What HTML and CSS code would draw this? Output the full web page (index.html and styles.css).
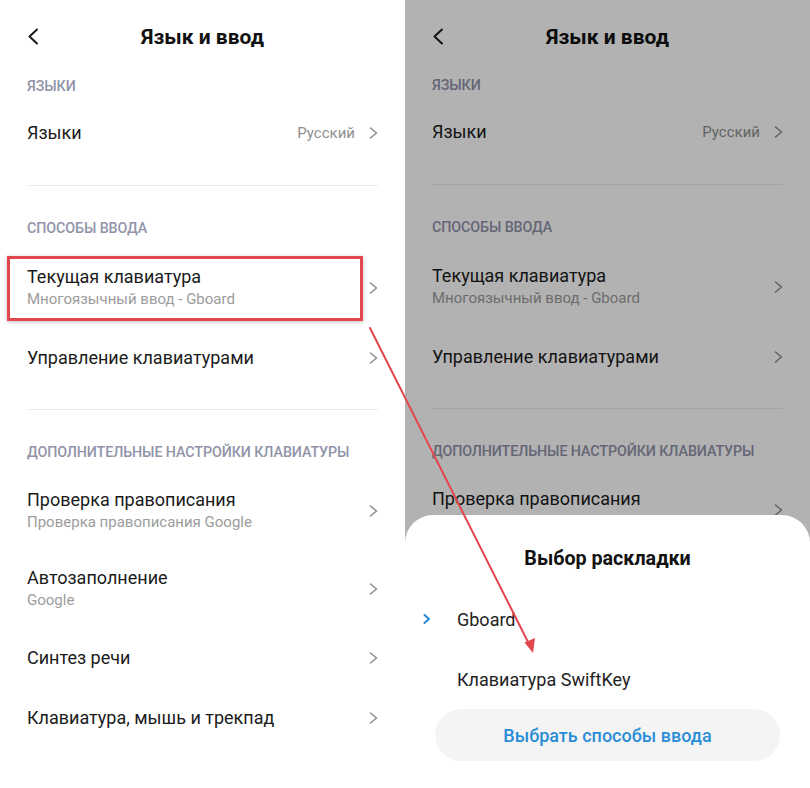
FILE: index.html
```html
<!DOCTYPE html>
<html lang="ru">
<head>
<meta charset="utf-8">
<title>Язык и ввод</title>
<link rel="stylesheet" href="styles.css">
</head>
<body>
<div class="page">
  <section class="screen">
    <header class="topbar">
      <svg class="back" viewBox="0 0 12 17" width="12" height="17"><path d="M10 1.5 L2.5 8.5 L10 15.5"/></svg>
      <h1 class="title">Язык и ввод</h1>
    </header>
    <div class="sec">ЯЗЫКИ</div>
    <div class="row row--compact"><span class="label">Языки</span><span class="value">Русский</span><svg class="chev" viewBox="0 0 9 12"><path d="M1.5 1 L7.5 6 L1.5 11"/></svg></div>
    <div class="divider"></div>
    <div class="sec">СПОСОБЫ ВВОДА</div>
    <div class="row row--two row--tall"><div class="text"><span class="label">Текущая клавиатура</span><span class="sub">Многоязычный ввод - Gboard</span></div><svg class="chev" viewBox="0 0 9 12"><path d="M1.5 1 L7.5 6 L1.5 11"/></svg></div>
    <div class="row"><span class="label">Управление клавиатурами</span><svg class="chev" viewBox="0 0 9 12"><path d="M1.5 1 L7.5 6 L1.5 11"/></svg></div>
    <div class="divider"></div>
    <div class="sec">ДОПОЛНИТЕЛЬНЫЕ НАСТРОЙКИ КЛАВИАТУРЫ</div>
    <div class="row row--two"><div class="text"><span class="label">Проверка правописания</span><span class="sub">Проверка правописания Google</span></div><svg class="chev" viewBox="0 0 9 12"><path d="M1.5 1 L7.5 6 L1.5 11"/></svg></div>
    <div class="row row--two"><div class="text"><span class="label">Автозаполнение</span><span class="sub">Google</span></div><svg class="chev" viewBox="0 0 9 12"><path d="M1.5 1 L7.5 6 L1.5 11"/></svg></div>
    <div class="row"><span class="label">Синтез речи</span><svg class="chev" viewBox="0 0 9 12"><path d="M1.5 1 L7.5 6 L1.5 11"/></svg></div>
    <div class="row"><span class="label">Клавиатура, мышь и трекпад</span><svg class="chev" viewBox="0 0 9 12"><path d="M1.5 1 L7.5 6 L1.5 11"/></svg></div>
    <div class="highlight"></div>
  </section>

  <section class="screen screen--dim">
    <header class="topbar">
      <svg class="back" viewBox="0 0 12 17" width="12" height="17"><path d="M10 1.5 L2.5 8.5 L10 15.5"/></svg>
      <h1 class="title">Язык и ввод</h1>
    </header>
    <div class="sec">ЯЗЫКИ</div>
    <div class="row row--compact"><span class="label">Языки</span><span class="value">Русский</span><svg class="chev" viewBox="0 0 9 12"><path d="M1.5 1 L7.5 6 L1.5 11"/></svg></div>
    <div class="divider"></div>
    <div class="sec">СПОСОБЫ ВВОДА</div>
    <div class="row row--two row--tall"><div class="text"><span class="label">Текущая клавиатура</span><span class="sub">Многоязычный ввод - Gboard</span></div><svg class="chev" viewBox="0 0 9 12"><path d="M1.5 1 L7.5 6 L1.5 11"/></svg></div>
    <div class="row"><span class="label">Управление клавиатурами</span><svg class="chev" viewBox="0 0 9 12"><path d="M1.5 1 L7.5 6 L1.5 11"/></svg></div>
    <div class="divider"></div>
    <div class="sec">ДОПОЛНИТЕЛЬНЫЕ НАСТРОЙКИ КЛАВИАТУРЫ</div>
    <div class="row row--two"><div class="text"><span class="label">Проверка правописания</span><span class="sub">Проверка правописания Google</span></div><svg class="chev" viewBox="0 0 9 12"><path d="M1.5 1 L7.5 6 L1.5 11"/></svg></div>
    <div class="row row--two"><div class="text"><span class="label">Автозаполнение</span><span class="sub">Google</span></div><svg class="chev" viewBox="0 0 9 12"><path d="M1.5 1 L7.5 6 L1.5 11"/></svg></div>
    <div class="scrim"></div>
    <div class="sheet">
      <h2 class="sheet-title">Выбор раскладки</h2>
      <div class="opt"><svg class="opt-mark" viewBox="0 0 8 10"><path d="M1.5 1 L6 5 L1.5 9"/></svg><span>Gboard</span></div>
      <div class="opt"><span class="opt-mark"></span><span>Клавиатура SwiftKey</span></div>
      <button class="btn">Выбрать способы ввода</button>
    </div>
  </section>

  <svg class="arrow" viewBox="0 0 810 788" width="810" height="788">
    <line x1="370" y1="328" x2="530" y2="646"/>
    <path class="head" d="M533 653 L524.5 642.5 L535 638 Z"/>
  </svg>
</div>
</body>
</html>
```

FILE: styles.css
```css
* { box-sizing: border-box; }
html, body { margin: 0; padding: 0; }
body {
  font-family: Roboto, "Noto Sans", "Liberation Sans", sans-serif;
  color: #1b1b1b;
  background: #fff;
}
.page {
  position: relative;
  display: flex;
  width: 810px;
  height: 788px;
  overflow: hidden;
}
.screen {
  position: relative;
  width: 405px;
  height: 788px;
  background: #fff;
  display: flex;
  flex-direction: column;
  overflow: hidden;
}
.screen--dim .topbar { height: 65px; }

.topbar {
  position: relative;
  height: 66px;
  display: flex;
  align-items: flex-start;
  justify-content: center;
  padding-top: 24px;
}
.back {
  position: absolute;
  left: 27px;
  top: 28px;
  fill: none;
  stroke: #1b1b1b;
  stroke-width: 2;
  stroke-linecap: round;
  stroke-linejoin: round;
}
.title {
  margin: 0;
  font-size: 21px;
  line-height: 26px;
  font-weight: 700;
  color: #111;
}

.sec {
  height: 40px;
  display: flex;
  align-items: center;
  padding: 0 27px;
  font-size: 14.3px;
  font-weight: 500;
  color: #9193a9;
  letter-spacing: -0.1px;
}

.row {
  height: 60px;
  display: flex;
  align-items: center;
  padding: 0 27px;
}
.row--compact { height: 58px; padding-bottom: 4px; }
.row--two { height: 78px; }
.row--tall { height: 80px; }
.text {
  flex: 1;
  display: flex;
  flex-direction: column;
}
.label {
  flex: 1;
  font-size: 18px;
  line-height: 22px;
  color: #1b1b1b;
}
.sub {
  font-size: 15px;
  line-height: 22px;
  color: #9c9c9c;
}
.value {
  font-size: 15px;
  color: #8f8f8f;
  margin-right: 14px;
}
.chev {
  width: 9px;
  height: 12px;
  flex: none;
  fill: none;
  stroke: #8e8e8e;
  stroke-width: 1.6;
  stroke-linecap: round;
  stroke-linejoin: round;
}
.divider {
  height: 1px;
  margin: 21px 27px 22px;
  background: #ebebeb;
}

.highlight {
  position: absolute;
  left: 7px;
  top: 256px;
  width: 356px;
  height: 65px;
  border: 3px solid #e2474d;
  box-shadow: 0 1px 4px rgba(0, 0, 0, 0.25);
}

.scrim {
  position: absolute;
  inset: 0;
  background: rgba(0, 0, 0, 0.3);
}
.sheet {
  position: absolute;
  left: 0;
  right: 0;
  top: 515px;
  bottom: 0;
  background: #fff;
  border-radius: 28px 28px 0 0;
  padding: 30px 30px 27px;
  display: flex;
  flex-direction: column;
}
.sheet-title {
  margin: 0 0 16px;
  text-align: center;
  font-size: 19.7px;
  line-height: 28px;
  font-weight: 700;
  color: #111;
}
.opt {
  height: 60px;
  display: flex;
  align-items: center;
  margin-left: -12px;
  font-size: 18px;
  color: #222;
}
.opt-mark {
  width: 8px;
  height: 10px;
  margin-right: 26px;
  flex: none;
  fill: none;
  stroke: #2a8ad4;
  stroke-width: 2;
  stroke-linecap: round;
  stroke-linejoin: round;
}
.btn {
  height: 52px;
  border: 0;
  border-radius: 26px;
  background: #f4f4f4;
  font-family: inherit;
  font-size: 18px;
  font-weight: 500;
  color: #2a8dd6;
  padding: 0;
}

.arrow {
  position: absolute;
  left: 0;
  top: 0;
  pointer-events: none;
}
.arrow line {
  stroke: #e2474d;
  stroke-width: 2;
  stroke-linecap: round;
}
.arrow .head { fill: #e2474d; }
```
